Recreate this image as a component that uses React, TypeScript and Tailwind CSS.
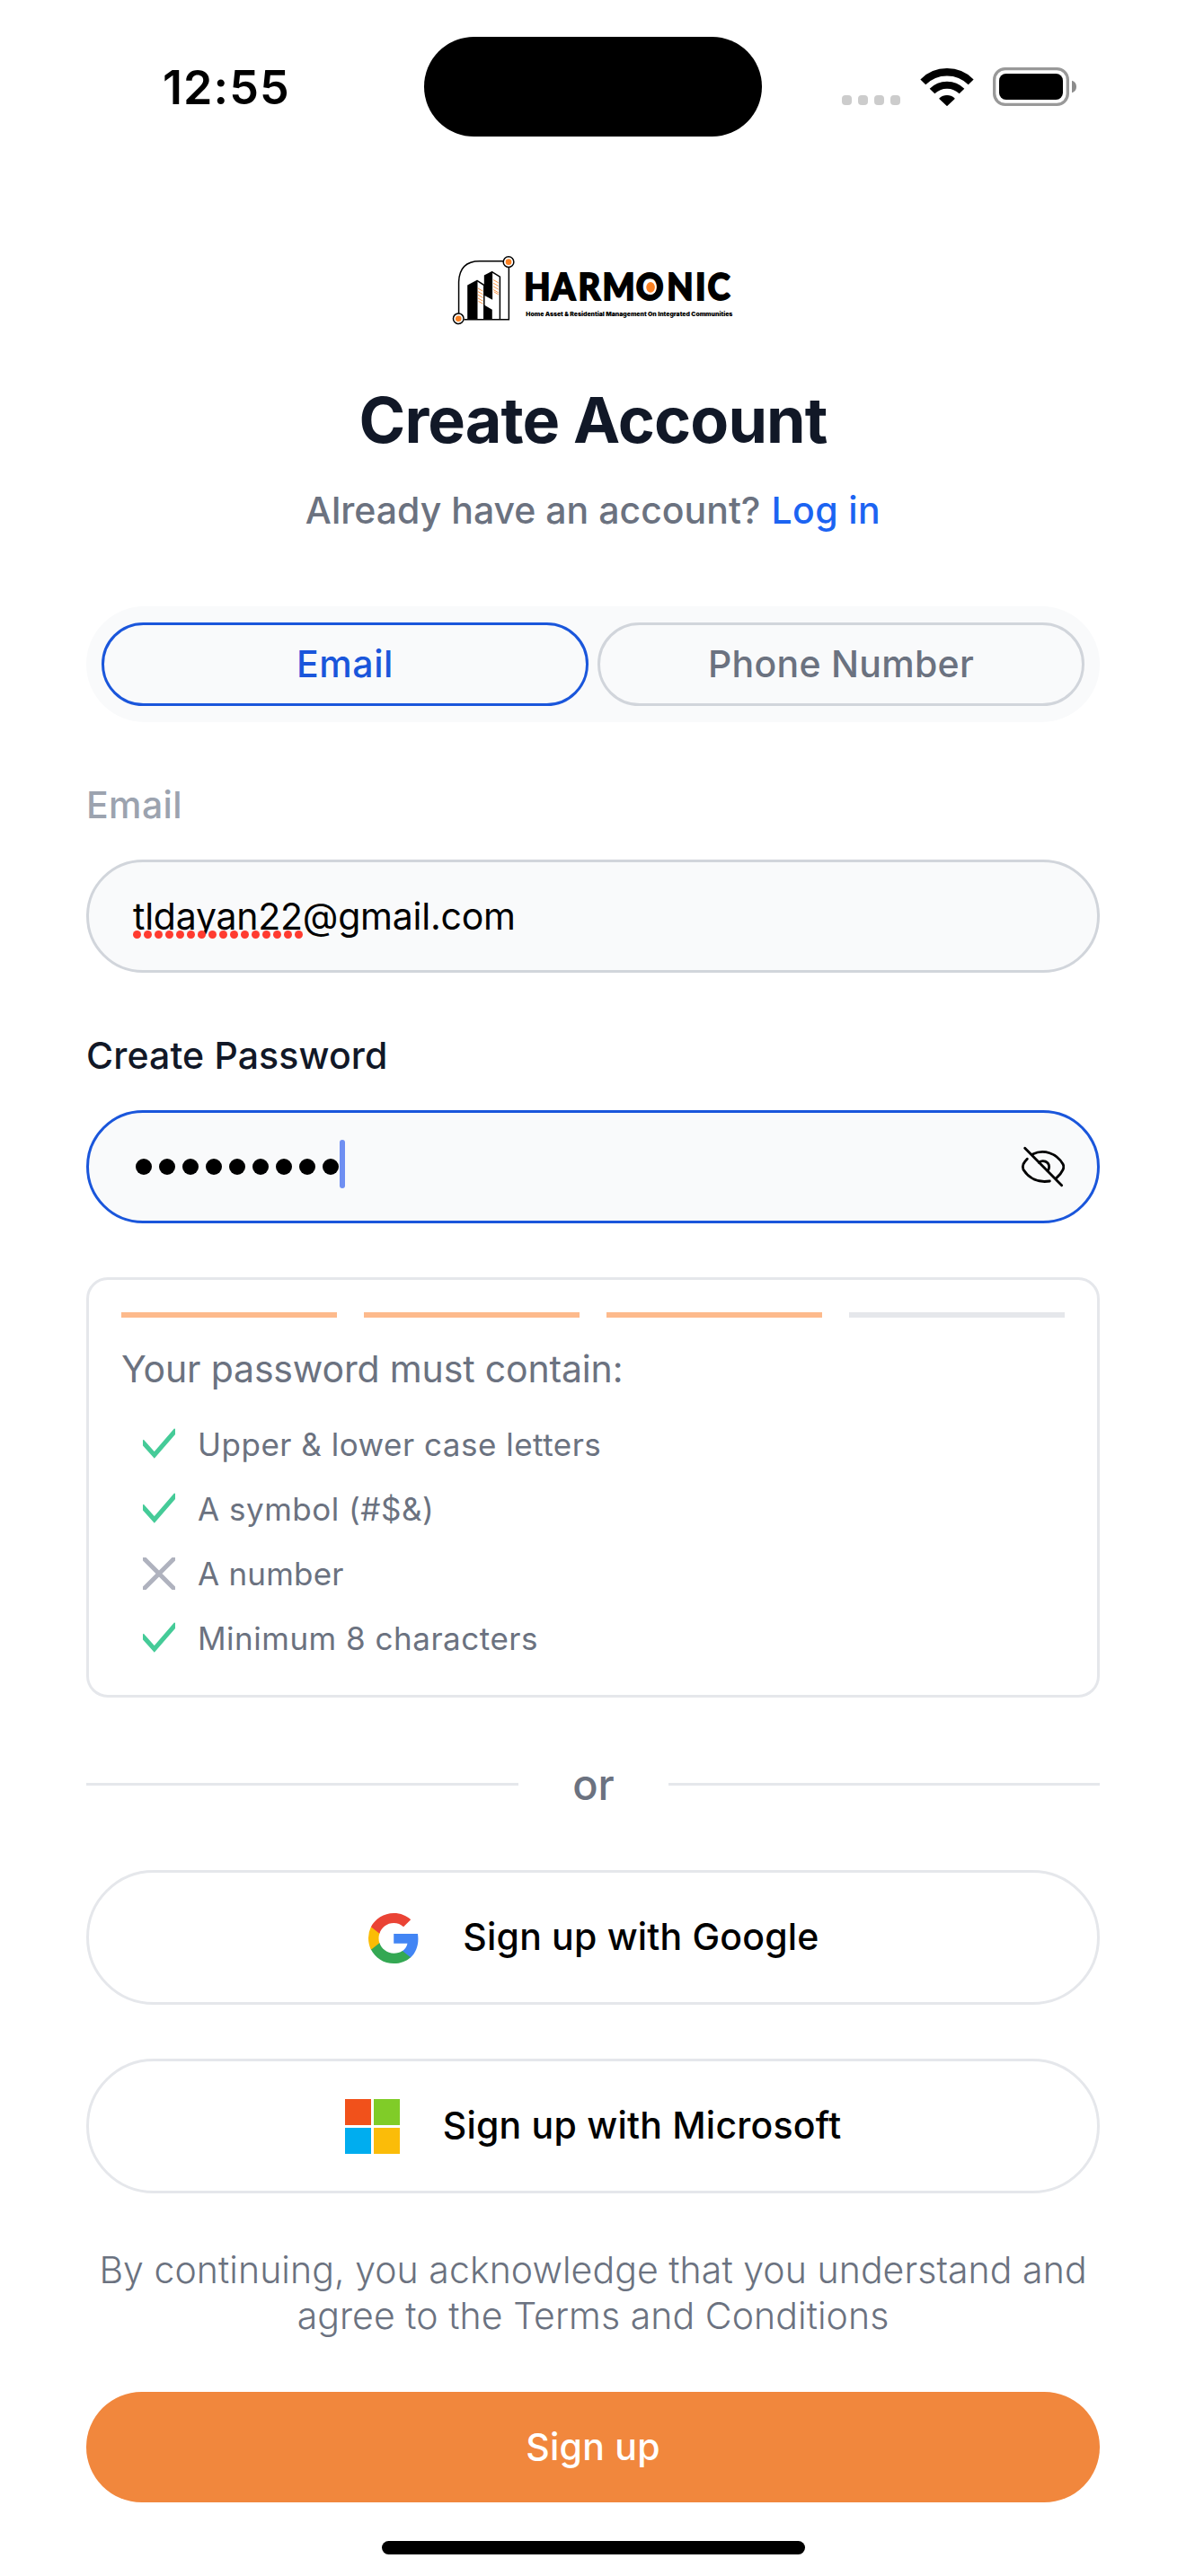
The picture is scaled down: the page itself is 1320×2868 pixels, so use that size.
import type { ReactNode } from "react";

function StatusBar() {
  return (
    <header className="flex h-[193px] items-center">
      <div className="ml-[181px] mt-[3px] w-[291px] text-[52px] font-semibold leading-none tracking-[1.08px] text-black">12:55</div>
      <div className="h-[111px] w-[376px] rounded-full bg-black" />
      <div className="ml-[89px] mt-[30px] flex gap-[7px]">
        {[0, 1, 2, 3].map((i) => (
          <span key={i} className="size-[11px] rounded-[4px] bg-[#cccccc]" />
        ))}
      </div>
      <svg className="ml-[22px] h-[44px] w-[60px] shrink-0" viewBox="371 72 180 132" fill="none">
        <path d="M381 121A113 113 0 0 1 541 121" stroke="#000" strokeWidth="25" />
        <path d="M411.500 151.500A70 70 0 0 1 510.500 151.500" stroke="#000" strokeWidth="24" />
        <path d="M461 199L437 176A36 36 0 0 1 485 176Z" fill="#000" stroke="#000" strokeWidth="4" strokeLinejoin="round" />
      </svg>
      <svg className="ml-[21px] h-[43px] w-[94px] shrink-0" viewBox="615 75 282 129" fill="none">
        <rect x="620" y="80" width="245" height="119" rx="36" stroke="#999" strokeWidth="10" />
        <rect x="636" y="96" width="213" height="87" rx="23" fill="#000" />
        <path d="M879 119Q894 124 894 139.500T879 160Z" fill="#8c8c8c" />
      </svg>
    </header>
  );
}

function Logo() {
  return (
    <svg className="mx-auto mt-[77px] h-[110px] w-[340px] shrink-0" viewBox="0 0 1024 331" fill="none">
      <path d="M62 238V132Q64 62 132 62H211M230 84V258H80" stroke="#000" strokeWidth="4.500" />
      <path d="M91 143L122 126L125 128V258H91Z" fill="#000" />
      <path d="M122 127L147 143V258" stroke="#000" strokeWidth="4.500" />
      <path d="M147 110L173 96L175 97V192L147 177Z" fill="#000" />
      <path d="M147 209L174 225V258H147Z" fill="#000" />
      <path d="M173 98L200 115V258" stroke="#000" strokeWidth="4.500" />
      <path
        d="M126 153L143 163M126 164L143 174M126 175L143 185M126 186L143 196M128 197L143 205M178 125L195 135M178 136L195 146M178 147L195 157M178 158L195 168M180 165L195 174"
        stroke="#fb8122"
        strokeWidth="2.500"
      />
      <circle cx="229" cy="65" r="17.500" fill="#fff" stroke="#000" strokeWidth="4.500" />
      <circle cx="229" cy="65" r="10" fill="#fb8122" />
      <circle cx="61" cy="255" r="17.500" fill="#fff" stroke="#000" strokeWidth="4.500" />
      <circle cx="61" cy="255" r="10" fill="#fb8122" />
      <text
        transform="scale(.9 1)"
        x="311.7 413.9 513.9 603.9 728.9 843.9 950.6 995.6"
        y="194"
        fontFamily="Lato, sans-serif"
        fontWeight="900"
        fontSize="127"
        fill="#000"
        stroke="#000"
        strokeWidth="5.500"
      >
        HARMONIC
      </text>
      <ellipse cx="705" cy="150" rx="20" ry="25" fill="#fff" />
      <ellipse cx="705" cy="150" rx="14.500" ry="18" fill="#fb8122" />
      <text x="287" y="248" textLength="693" lengthAdjust="spacingAndGlyphs" fontFamily="Inter, sans-serif" fontWeight="900" fontSize="20.500" fill="#000">
        Home Asset &amp; Residential Management On Integrated Communities
      </text>
    </svg>
  );
}

function EyeOff() {
  return (
    <svg className="h-[48px] w-[50px]" viewBox="45 45 150 144" fill="none" stroke="#000" strokeWidth="8.500" strokeLinecap="round" strokeLinejoin="round">
      <path d="M62 55L185 179" />
      <path d="M88 75C125 57 168 72 189 108Q194 117 189 127Q182 142 167 155" />
      <path d="M70 91Q62 99 57 108Q53 117 57 127C76 157 108 171 145 165" />
      <path d="M109 103C122 92 142 100 143 117Q143 125 138 131" />
    </svg>
  );
}

function Check() {
  return (
    <svg className="size-[36px]" viewBox="0 0 36 36" fill="none" stroke="#45cb98" strokeWidth="5">
      <path d="M-1 14.500L12.800 30L37 2" />
    </svg>
  );
}

function Cross() {
  return (
    <svg className="size-[36px]" viewBox="0 0 36 36" fill="none" stroke="#afb2be" strokeWidth="5">
      <path d="M-1 -1L37 37M37 -1L-1 37" />
    </svg>
  );
}

function GoogleIcon() {
  return (
    <svg className="mt-[2px] size-[56px]" viewBox="0 0 48 48">
      <path fill="#4285f4" d="M47.500 24.550c0-1.700-.150-3.330-.430-4.900H24.200v9.270h13.070c-.560 3.040-2.270 5.610-4.840 7.340v6.100h7.840C44.860 38.140 47.500 31.930 47.500 24.550z" />
      <path fill="#34a853" d="M24.200 48c6.550 0 12.040-2.170 16.070-5.880l-7.840-6.100c-2.170 1.460-4.950 2.320-8.230 2.320-6.330 0-11.690-4.280-13.600-10.020H2.490v6.290C6.490 42.560 14.690 48 24.200 48z" />
      <path fill="#fbbc05" d="M10.600 28.550A14.400 14.400 0 0 1 9.850 24c0-1.580.270-3.110.750-4.550v-6.290H2.490A24 24 0 0 0 0 24c0 3.880.900 7.550 2.490 10.840z" />
      <path fill="#ea4335" d="M24.200 9.500c3.570 0 6.770 1.230 9.290 3.640l6.960-6.960C36.240 2.260 30.740 0 24.200 0 14.690 0 6.490 5.440 2.490 13.160l8.110 6.290C12.510 13.710 17.870 9.500 24.200 9.500z" />
    </svg>
  );
}

function MicrosoftIcon() {
  return (
    <div className="grid size-[61px] grid-cols-2 gap-[3px]">
      <span className="bg-[#f1511b]" />
      <span className="bg-[#80cc28]" />
      <span className="bg-[#00adef]" />
      <span className="bg-[#fbbc09]" />
    </div>
  );
}

function Rule({ ok, children, tracking = "tracking-[0.5px]" }: { ok: boolean; children: ReactNode; tracking?: string }) {
  return (
    <li className="flex h-[72px] items-center gap-[25px] pl-[24px]">
      {ok ? <Check /> : <Cross />}
      <span className={`text-[35px] leading-none ${tracking}`}>{children}</span>
    </li>
  );
}

export default function App() {
  return (
    <div className="flex h-[2868px] w-[1320px] flex-col overflow-hidden bg-white font-['Inter',sans-serif] text-[41px]">
      <StatusBar />
      <main className="flex flex-col px-[96px]">
        <Logo />
        <h1 className="mt-[48px] text-center text-[70px] font-bold leading-[80px] tracking-[-0.9px] text-[#111827]">Create Account</h1>
        <p className="mt-[30px] text-center font-medium leading-[60px] text-[#6b7280]">
          Already have an account? <a className="ml-[1px] tracking-[0.4px] text-[#1c64f2]">Log in</a>
        </p>

        <div className="mt-[77px] grid h-[129px] grid-cols-2 gap-[10px] rounded-full bg-[#f9fafb] px-[17px] py-[18px] font-medium leading-none">
          <button className="rounded-full border-[3px] border-[#1a56db] tracking-[0.6px] text-[#1a56db]">Email</button>
          <button className="rounded-full border-[3px] border-[#d1d5db] tracking-[0.28px] text-[#6b7280]">Phone Number</button>
        </div>

        <label className="mt-[67px] font-medium leading-[50px] tracking-[0.4px] text-[#9ca3af]">Email</label>
        <div className="mt-[36px] flex h-[126px] items-center rounded-full border-[3px] border-[#d1d5db] bg-[#f9fafb] pl-[49px] leading-none tracking-[-0.24px] text-black">
          <span className="relative">
            tldayan22
            <span className="absolute left-0 top-[36px] flex gap-[3px]">
              {Array.from({ length: 16 }, (_, i) => (
                <span key={i} className="size-[9px] shrink-0 rounded-full bg-[#ff3b30]" />
              ))}
            </span>
          </span>
          @gmail.com
        </div>

        <label className="mt-[67px] font-medium leading-[50px] tracking-[0.13px] text-[#111827]">Create Password</label>
        <div className="mt-[36px] flex h-[126px] items-center justify-between rounded-full border-[3px] border-[#1a56db] bg-[#f9fafb] pl-[52px] pr-[36px]">
          <div className="flex items-center gap-[8px]">
            {Array.from({ length: 9 }, (_, i) => (
              <span key={i} className="size-[18px] rounded-full bg-black" />
            ))}
            <span className="-ml-[7px] mb-[6px] h-[54px] w-[6px] rounded-full bg-[#6f8ff2]" />
          </div>
          <EyeOff />
        </div>

        <section className="mt-[60px] h-[468px] rounded-[24px] border-[3px] border-[#e5e7eb] p-[36px] text-[#6b7280]">
          <div className="grid grid-cols-4 gap-[30px]">
            <span className="h-[6px] bg-[#fdba8c]" />
            <span className="h-[6px] bg-[#fdba8c]" />
            <span className="h-[6px] bg-[#fdba8c]" />
            <span className="h-[6px] bg-[#e5e7eb]" />
          </div>
          <p className="mt-[32px] leading-[50px] tracking-[-0.16px]">Your password must contain:</p>
          <ul className="mt-[23px]">
            <Rule ok>Upper &amp; lower case letters</Rule>
            <Rule ok>A symbol (#$&amp;)</Rule>
            <Rule ok={false} tracking="tracking-[0.2px]">A number</Rule>
            <Rule ok>Minimum 8 characters</Rule>
          </ul>
        </section>

        <div className="mt-[66px] flex h-[61px] items-center justify-between">
          <span className="h-[3px] w-[481px] bg-[#e5e7eb]" />
          <span className="text-[47px] font-medium leading-none text-[#6b7280]">or</span>
          <span className="h-[3px] w-[480px] bg-[#e5e7eb]" />
        </div>

        <button className="mt-[65px] flex h-[150px] items-center justify-center gap-[49px] rounded-full border-[3px] border-[#e5e7eb] pl-[2px] font-medium leading-none tracking-[0.19px] text-black">
          <GoogleIcon />
          <span className="-mt-[2px]">Sign up with Google</span>
        </button>
        <button className="mt-[60px] flex h-[150px] items-center justify-center gap-[48px] rounded-full border-[3px] border-[#e5e7eb] font-medium leading-none tracking-[0.22px] text-black">
          <MicrosoftIcon />
          <span className="-mt-[2px]">Sign up with Microsoft</span>
        </button>

        <p className="-mx-[10px] mt-[60px] text-center font-light leading-[51px] tracking-[0.06px] text-[#6b7280]">
          By continuing, you acknowledge that you understand and
          <br />
          agree to the Terms and Conditions
        </p>
        <button className="mt-[59px] h-[123px] rounded-full bg-[#f1873d] font-medium leading-none tracking-[0.25px] text-white">Sign up</button>
      </main>
      <div className="mx-auto mt-[43px] h-[15px] w-[471px] rounded-full bg-black" />
    </div>
  );
}
